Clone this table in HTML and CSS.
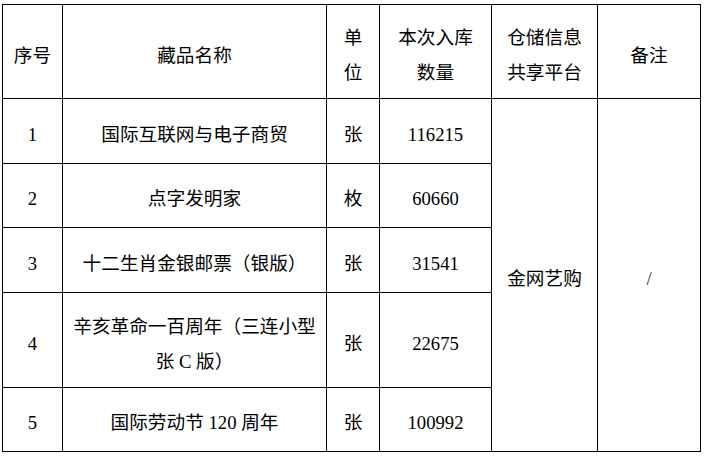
FILE: index.html
```html
<!DOCTYPE html>
<html lang="zh">
<head>
<meta charset="utf-8">
<link rel="stylesheet" href="styles.css">
</head>
<body>
<table class="inv">
<colgroup>
<col class="c1"><col class="c2"><col class="c3"><col class="c4"><col class="c5"><col class="c6">
</colgroup>
<tr class="head">
<td>序号</td>
<td>藏品名称</td>
<td>单<br>位</td>
<td>本次入库<br>数量</td>
<td>仓储信息<br>共享平台</td>
<td>备注</td>
</tr>
<tr class="r1">
<td>1</td>
<td>国际互联网与电子商贸</td>
<td>张</td>
<td>116215</td>
<td rowspan="5">金网艺购</td>
<td rowspan="5" class="slash">/</td>
</tr>
<tr class="r2">
<td>2</td>
<td>点字发明家</td>
<td>枚</td>
<td>60660</td>
</tr>
<tr class="r3">
<td>3</td>
<td>十二生肖金银邮票（银版）</td>
<td>张</td>
<td>31541</td>
</tr>
<tr class="r4">
<td>4</td>
<td>辛亥革命一百周年（三连小型<br>张 C 版）</td>
<td>张</td>
<td>22675</td>
</tr>
<tr class="r5">
<td>5</td>
<td>国际劳动节 120 周年</td>
<td>张</td>
<td>100992</td>
</tr>
</table>
</body>
</html>
```
FILE: styles.css
```css
html, body {
  margin: 0;
  padding: 0;
  background: #fff;
}
body {
  padding: 4px 0 0 2px;
}
.inv {
  border-collapse: collapse;
  table-layout: fixed;
  width: 698px;
  font-family: "Liberation Serif", "Noto Sans CJK SC", serif;
  font-size: 18.67px;
  color: #000;
}
.c1 { width: 60px; }
.c2 { width: 264px; }
.c3 { width: 53px; }
.c4 { width: 112px; }
.c5 { width: 106px; }
.c6 { width: 103px; }
.inv td {
  border: 1px solid #000;
  text-align: center;
  vertical-align: middle;
  padding: 7px 0 0 0;
  line-height: 36px;
  white-space: nowrap;
}
.head td { height: 94px; box-sizing: border-box; }
.r1 td { height: 65px; box-sizing: border-box; }
.r2 td { height: 64px; box-sizing: border-box; }
.r3 td { height: 65px; box-sizing: border-box; }
.r4 td { height: 95px; box-sizing: border-box; }
.r5 td { height: 64px; box-sizing: border-box; }
.r4 td, .head td { line-height: 35px; }
.slash { color: #333; }
```
